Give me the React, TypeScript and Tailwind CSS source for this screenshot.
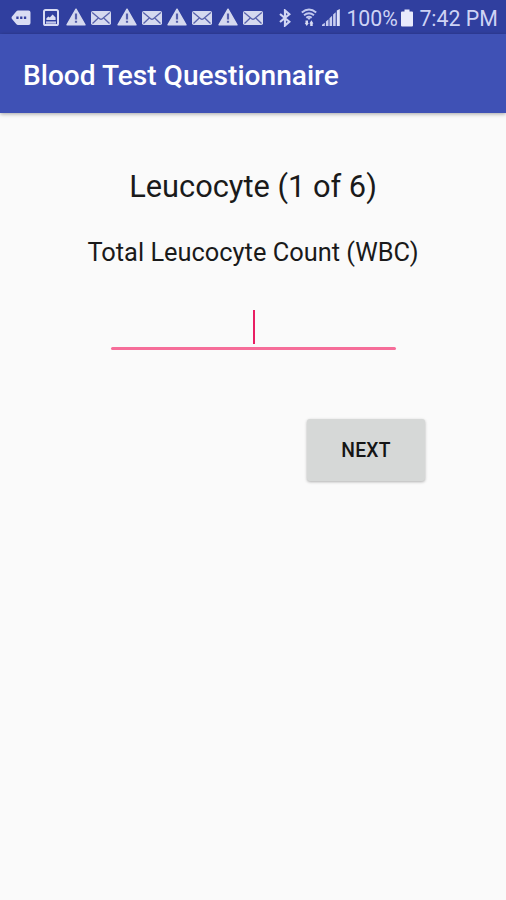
import React, { useState } from 'react'

const font = { fontFamily: 'Roboto, "Noto Sans", sans-serif' }

const MoreIcon = () => (
  <svg width="20" height="16" viewBox="0 0 20 16" fill="none">
    <path d="M7 .5H17.5Q19.5 .5 19.5 2.5V13Q19.5 15 17.5 15H7Q6 15 5.2 14L.8 8.8Q.2 7.8 .8 6.8L5.2 1.5Q6 .5 7 .5Z" fill="#d9dcf3" />
    <path d="M5.3 6.6h2.3v2.3H5.3zM9.1 6.6h2.3v2.3H9.1zM12.9 6.6h2.3v2.3h-2.3z" fill="#3440a0" />
  </svg>
)

const ImageIcon = () => (
  <svg width="16" height="17" viewBox="0 0 16 17" fill="none">
    <rect x="1" y="1" width="14" height="15" rx="1.6" stroke="#d9dcf3" strokeWidth="2" />
    <path d="M3.4 11V9.3L5.4 7.4L6.8 8.5L9.6 5.6L12.6 8.4V11Z" fill="#d9dcf3" />
    <path d="M3 12.4h10v2.3H3z" fill="#c3c8ea" />
  </svg>
)

const WarningIcon = () => (
  <svg width="20" height="18" viewBox="0 0 20 18" fill="none">
    <path d="M10 1.2L19 16.8H1Z" fill="#d5d9ef" stroke="#d5d9ef" strokeWidth="1.4" strokeLinejoin="round" />
    <path d="M8.9 5.6h2.2v5.9H8.9zM8.9 12.8h2.2v2H8.9z" fill="#5660ac" />
  </svg>
)

const MailIcon = () => (
  <svg width="20" height="14" viewBox="0 0 20 14" fill="none">
    <rect width="20" height="14" rx="1.8" fill="#d5d9ef" />
    <path d="M1.2 1.5L8.6 7.7Q10 8.9 11.4 7.7L18.8 1.5M1.5 12.5L7 7.2M18.5 12.5L13 7.2" stroke="#5660ac" strokeWidth="1.3" />
  </svg>
)

const BluetoothIcon = () => (
  <svg width="12" height="18" viewBox="0 0 12 18" fill="none">
    <path d="M1 5L10.3 12.7L6 16.5V1.5L10.3 5.3L1 13" stroke="#d0d5f3" strokeWidth="2.2" />
  </svg>
)

const WifiIcon = () => (
  <svg width="16" height="19" viewBox="0 0 16 19" fill="none">
    <path d="M.8 4.4Q8 -1.6 15.2 4.4M3 7.3Q8 3.2 13 7.3M5.3 9.8Q8 7.6 10.7 9.8" stroke="#c3c9ef" strokeWidth="1.9" />
    <path d="M8 12L6 9.8H10Z" fill="#c3c9ef" />
    <path d="M4.5 12.5H7V15H7.8L5.75 18L3.7 15H4.5ZM9.2 18V15.4H8.4L10.4 12.3L12.4 15.4H11.7V18Z" fill="#d9dcf3" />
  </svg>
)

const SignalIcon = () => (
  <svg width="18" height="17" viewBox="0 0 18 17" fill="#c8cdf0">
    <path d="M0 17V15.8L2.8 13.8V17ZM3.9 17V12.6L6.5 10.3V17ZM7.5 17V9.2L10.1 6.8V17ZM11.1 17V5.6L13.7 3.2V17Z" />
    <path d="M14.8 17V1.6L17.8 0V17Z" fill="#dfe2fa" />
  </svg>
)

const BatteryIcon = () => (
  <svg width="12" height="18" viewBox="0 0 12 18" fill="#e9ebfc">
    <path d="M3.5 .5h5v2H11a1 1 0 0 1 1 1V16.5a1 1 0 0 1-1 1H1a1 1 0 0 1-1-1V3.5a1 1 0 0 1 1-1H3.5z" />
  </svg>
)

const notifications = [0, 1, 2, 3]

const StatusBar = () => {
  return <div className="flex h-[34px] items-center bg-[#303f9f] pl-[11px] text-[#ced3f5]">
    <div className="pt-px"><MoreIcon /></div>
    <div className="ml-3 mr-[7px] pt-px">
      <ImageIcon />
    </div>
    {
      notifications.map((id) => (
        <div key={id} className="flex w-[50.6px] shrink-0 items-center gap-[5.3px]">
          <WarningIcon />
          <div className="pt-px"><MailIcon /></div>
        </div>
      ))
    }
    <div className="ml-[11px] flex shrink-0 items-center pt-px">
      <BluetoothIcon />
      <div className="ml-[10px]"><WifiIcon /></div>
      <div className="ml-[5px]"><SignalIcon /></div>
    </div>
    <span className="ml-[6px] w-[52px] shrink-0 whitespace-nowrap pt-[3px] text-[21.3px] leading-7">100%</span>
    <div className="ml-[3px] shrink-0 pt-px"><BatteryIcon /></div>
    <span className="ml-[6px] shrink-0 whitespace-nowrap pt-[3px] text-[21.3px] leading-7">7:42 PM</span>
  </div>
}

const AppBar = () => {
  return <header className="flex h-[79px] items-center bg-[#3f51b5] pl-[23px] pt-[5px] shadow-[0_1px_4px_rgba(0,0,0,0.35)]">
    <h1 className="whitespace-nowrap text-[28.1px] font-medium text-white">Blood Test Questionnaire</h1>
  </header>
}

export default function App() {
  const [count] = useState('')

  return <div style={font} className="h-[900px] w-[506px] overflow-hidden bg-[#fafafa] text-[#1a1a1a]">
    <StatusBar />
    <AppBar />
    <main className="flex flex-col items-center">
      <h2 className="mt-[54px] whitespace-nowrap text-[30.8px] leading-10">Leucocyte (1 of 6)</h2>
      <p className="mt-[29px] whitespace-nowrap text-[25.4px] leading-8">Total Leucocyte Count (WBC)</p>
      <div className="mt-[42px] flex h-[37px] justify-center">
        <span>{count}</span>
        <span className="ml-[2px] h-[34px] w-[2px] bg-[#e91e63]" />
      </div>
      <div className="h-[3px] w-[285px] rounded-full bg-[#f66d99]" />
      <button className="ml-[225px] mt-[69px] h-[62px] w-[118px] rounded-[3px] bg-[#d6d8d7] pl-px pt-[3px] text-[19.3px] font-medium tracking-[0.2px] text-[#151515] shadow-[0_1px_3px_rgba(0,0,0,0.3)]">
        NEXT
      </button>
    </main>
  </div>
}
